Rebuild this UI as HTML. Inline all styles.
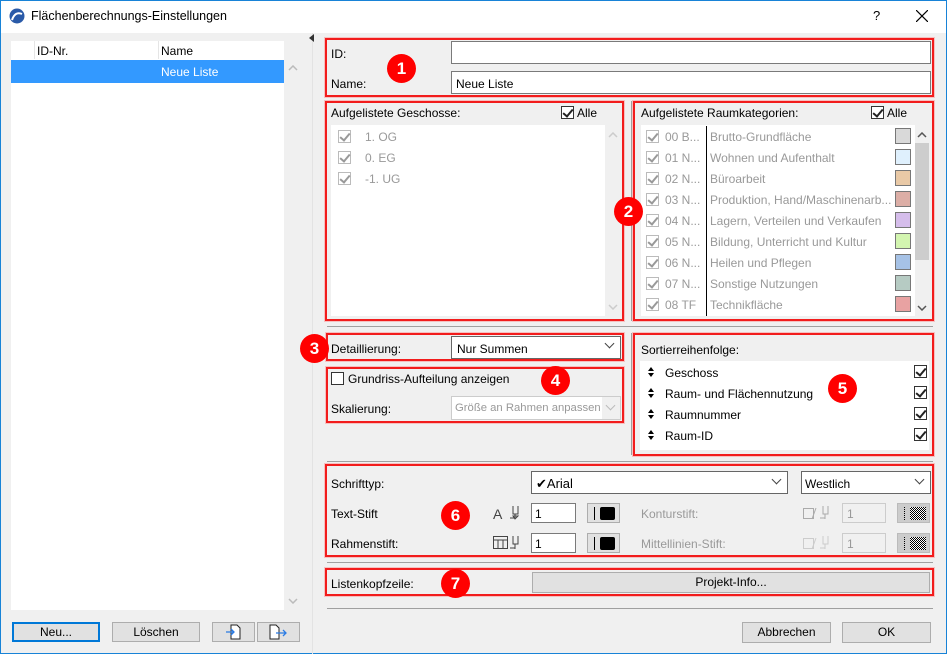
<!DOCTYPE html>
<html><head><meta charset="utf-8"><style>
*{box-sizing:border-box;margin:0;padding:0}
body{width:947px;height:654px;overflow:hidden;background:#f0f0f0;font-family:"Liberation Sans",sans-serif;font-size:12px;color:#000;position:relative}
.a{position:absolute}
.red{position:absolute;border:2px solid #f21c1c;box-shadow:0 0 0 1px rgba(255,120,120,.4)}
.in{position:absolute;background:#fff;border:1px solid #7a7a7a}
.btn{position:absolute;background:#e1e1e1;border:1px solid #adadad;text-align:center;line-height:18px}
.num{position:absolute;width:29px;height:29px;border-radius:50%;background:#f00;color:#fff;font-weight:bold;font-size:17px;text-align:center;line-height:29px}
.cb{position:absolute;width:13px;height:13px;border:1px solid #333;background:#fff}
.cb.g{border-color:#bbb;background:#fff}
.cb::after{content:"";position:absolute;left:3px;top:0px;width:4px;height:8px;border:solid #222;border-width:0 2px 2px 0;transform:rotate(40deg)}
.cb.g::after{border-color:#999}
.cb.n::after{display:none}
.hl{position:absolute;height:1px;background:#a0a0a0}
.gr{color:#999}
.dd{position:absolute;right:6px;top:5px;width:7px;height:7px;border:solid #444;border-width:0 1px 1px 0;transform:rotate(45deg)}
.sw{position:absolute;width:16px;height:16px;border:1px solid #777}
</style></head><body>
<div class="a" style="left:0;top:0;width:947px;height:654px;border:1px solid #1883d7"></div>
<div class="a" style="left:1px;top:1px;width:945px;height:32px;background:#fff"></div>
<svg class="a" style="left:9px;top:8px" width="16" height="16"><circle cx="8" cy="8" r="7.5" fill="#2a5aa8"/><path d="M3 12 Q6 3 13 6" stroke="#fff" stroke-width="2" fill="none"/></svg>
<div class="a" style="left:31px;top:9px;font-size:12.5px">Flächenberechnungs-Einstellungen</div>
<div class="a" style="left:873px;top:8px;font-size:13px">?</div>
<svg class="a" style="left:916px;top:10px" width="12" height="12"><path d="M0 0L12 12M12 0L0 12" stroke="#000" stroke-width="1.2"/></svg>

<!-- left list -->
<div class="a" style="left:11px;top:41px;width:273px;height:569px;background:#fff"></div>
<div class="a" style="left:34px;top:41px;width:1px;height:18px;background:#e5e5e5"></div>
<div class="a" style="left:158px;top:41px;width:1px;height:18px;background:#e5e5e5"></div>
<div class="a" style="left:37px;top:44px">ID-Nr.</div>
<div class="a" style="left:161px;top:44px">Name</div>
<div class="a" style="left:11px;top:60px;width:273px;height:23px;background:#3399ff"></div>
<div class="a" style="left:161px;top:65px;color:#fff">Neue Liste</div>
<svg class="a" style="left:288px;top:65px" width="10" height="6"><path d="M1 5l4-4 4 4" stroke="#bbb" stroke-width="1.5" fill="none"/></svg>
<svg class="a" style="left:288px;top:598px" width="10" height="6"><path d="M1 1l4 4 4-4" stroke="#bbb" stroke-width="1.5" fill="none"/></svg>
<div class="btn" style="left:12px;top:622px;width:88px;height:20px;border:2px solid #0078d7;line-height:16px">Neu...</div>
<div class="btn" style="left:112px;top:622px;width:88px;height:20px">Löschen</div>
<div class="btn" style="left:212px;top:622px;width:43px;height:20px"></div>
<div class="btn" style="left:257px;top:622px;width:43px;height:20px"></div>
<svg class="a" style="left:224px;top:624px" width="20" height="16"><path d="M7 1h6l3 3v11H7z" fill="#fff" stroke="#222"/><path d="M2 8h8M7 5l3 3-3 3" stroke="#2a7be4" fill="none" stroke-width="1.3"/></svg>
<svg class="a" style="left:268px;top:624px" width="22" height="16"><path d="M2 1h6l3 3v11H2z" fill="#fff" stroke="#222"/><path d="M8 9h10M15 6l3 3-3 3" stroke="#2a7be4" fill="none" stroke-width="1.3"/></svg>

<div class="a" style="left:312px;top:33px;width:1px;height:621px;background:#e3e3e3"></div>
<div class="a" style="left:309px;top:34px;width:0;height:0;border-top:4px solid transparent;border-bottom:4px solid transparent;border-right:5px solid #333"></div>

<!-- box1 -->
<div class="red" style="left:325px;top:38px;width:609px;height:59px"></div>
<div class="a" style="left:331px;top:47px">ID:</div>
<div class="in" style="left:451px;top:41px;width:480px;height:23px"></div>
<div class="a" style="left:331px;top:77px">Name:</div>
<div class="in" style="left:451px;top:71px;width:480px;height:23px"></div>
<div class="a" style="left:456px;top:77px">Neue Liste</div>
<div class="num" style="left:387px;top:54px">1</div>

<!-- box2 left -->
<div class="red" style="left:325px;top:101px;width:299px;height:220px"></div>
<div class="a" style="left:331px;top:106px">Aufgelistete Geschosse:</div>
<div class="cb" style="left:561px;top:106px"></div><div class="a" style="left:577px;top:106px">Alle</div>
<div class="a" style="left:331px;top:125px;width:274px;height:191px;background:#fff"></div>
<svg class="a" style="left:608px;top:132px" width="10" height="6"><path d="M1 5l4-4 4 4" stroke="#ccc" stroke-width="1.5" fill="none"/></svg>
<svg class="a" style="left:608px;top:304px" width="10" height="6"><path d="M1 1l4 4 4-4" stroke="#ccc" stroke-width="1.5" fill="none"/></svg>
<div class="cb g" style="left:338px;top:130px"></div><div class="a gr" style="left:365px;top:130px">1. OG</div>
<div class="cb g" style="left:338px;top:151px"></div><div class="a gr" style="left:365px;top:151px">0. EG</div>
<div class="cb g" style="left:338px;top:172px"></div><div class="a gr" style="left:365px;top:172px">-1. UG</div>

<div class="a" style="left:631px;top:101px;width:1px;height:220px;background:#a0a0a0"></div>
<!-- box2 right -->
<div class="red" style="left:633px;top:101px;width:301px;height:220px"></div>
<div class="a" style="left:641px;top:106px">Aufgelistete Raumkategorien:</div>
<div class="cb" style="left:871px;top:106px"></div><div class="a" style="left:887px;top:106px">Alle</div>
<div class="a" style="left:641px;top:125px;width:274px;height:191px;background:#fff"></div>
<div class="a" style="left:706px;top:126px;width:1px;height:190px;background:#000"></div>
<div class="a" style="left:915px;top:143px;width:14px;height:117px;background:#cdcdcd"></div>
<svg class="a" style="left:917px;top:132px" width="10" height="6"><path d="M1 5l4-4 4 4" stroke="#555" stroke-width="1.5" fill="none"/></svg>
<svg class="a" style="left:917px;top:305px" width="10" height="6"><path d="M1 1l4 4 4-4" stroke="#555" stroke-width="1.5" fill="none"/></svg>
<div class="cb g" style="left:646px;top:130px"></div><div class="a gr" style="left:665px;top:130px">00 B...</div><div class="a gr" style="left:710px;top:130px">Brutto-Grundfläche</div><div class="sw" style="left:895px;top:128px;background:#d9d9d9"></div>
<div class="cb g" style="left:646px;top:151px"></div><div class="a gr" style="left:665px;top:151px">01 N...</div><div class="a gr" style="left:710px;top:151px">Wohnen und Aufenthalt</div><div class="sw" style="left:895px;top:149px;background:#dff0fd"></div>
<div class="cb g" style="left:646px;top:172px"></div><div class="a gr" style="left:665px;top:172px">02 N...</div><div class="a gr" style="left:710px;top:172px">Büroarbeit</div><div class="sw" style="left:895px;top:170px;background:#e9c9a6"></div>
<div class="cb g" style="left:646px;top:193px"></div><div class="a gr" style="left:665px;top:193px">03 N...</div><div class="a gr" style="left:710px;top:193px">Produktion, Hand/Maschinenarb...</div><div class="sw" style="left:895px;top:191px;background:#dcaea6"></div>
<div class="cb g" style="left:646px;top:214px"></div><div class="a gr" style="left:665px;top:214px">04 N...</div><div class="a gr" style="left:710px;top:214px">Lagern, Verteilen und Verkaufen</div><div class="sw" style="left:895px;top:212px;background:#d5bdeb"></div>
<div class="cb g" style="left:646px;top:235px"></div><div class="a gr" style="left:665px;top:235px">05 N...</div><div class="a gr" style="left:710px;top:235px">Bildung, Unterricht und Kultur</div><div class="sw" style="left:895px;top:233px;background:#d3f5b0"></div>
<div class="cb g" style="left:646px;top:256px"></div><div class="a gr" style="left:665px;top:256px">06 N...</div><div class="a gr" style="left:710px;top:256px">Heilen und Pflegen</div><div class="sw" style="left:895px;top:254px;background:#a6c2e6"></div>
<div class="cb g" style="left:646px;top:277px"></div><div class="a gr" style="left:665px;top:277px">07 N...</div><div class="a gr" style="left:710px;top:277px">Sonstige Nutzungen</div><div class="sw" style="left:895px;top:275px;background:#b6cbc3"></div>
<div class="cb g" style="left:646px;top:298px"></div><div class="a gr" style="left:665px;top:298px">08 TF</div><div class="a gr" style="left:710px;top:298px">Technikfläche</div><div class="sw" style="left:895px;top:296px;background:#e8a2a2"></div>
<div class="num" style="left:614px;top:197px">2</div>

<div class="hl" style="left:327px;top:326px;width:606px"></div>

<!-- box3 -->
<div class="red" style="left:326px;top:333px;width:298px;height:28px"></div>
<div class="a" style="left:331px;top:342px">Detaillierung:</div>
<div class="in" style="left:451px;top:336px;width:170px;height:23px;border-color:#666"></div>
<div class="a" style="left:457px;top:342px">Nur Summen</div>
<div class="dd" style="left:606px;top:340px"></div>
<div class="num" style="left:300px;top:334px">3</div>

<!-- box4 -->
<div class="red" style="left:326px;top:367px;width:298px;height:56px"></div>
<div class="cb n" style="left:331px;top:372px"></div>
<div class="a" style="left:348px;top:372px">Grundriss-Aufteilung anzeigen</div>
<div class="a" style="left:331px;top:402px">Skalierung:</div>
<div class="a" style="left:451px;top:396px;width:170px;height:24px;border:1px solid #ccc;background:#f0f0f0"></div>
<div class="a" style="left:452px;top:397px;width:150px;height:22px;background:#fff"></div>
<div class="a" style="left:455px;top:402px;color:#999;font-size:11.3px">Größe an Rahmen anpassen</div>
<div class="dd" style="left:607px;top:402px;border-color:#bbb"></div>
<div class="num" style="left:541px;top:366px">4</div>

<div class="a" style="left:631px;top:333px;width:1px;height:122px;background:#a0a0a0"></div>
<!-- box5 -->
<div class="red" style="left:633px;top:333px;width:301px;height:123px"></div>
<div class="a" style="left:641px;top:343px">Sortierreihenfolge:</div>
<div class="a" style="left:640px;top:361px;width:289px;height:89px;background:#fff"></div>
<svg class="a" style="left:648px;top:367px" width="6" height="10"><path d="M0 4L3 0 6 4zM0 6L3 10 6 6z" fill="#000"/></svg><div class="a" style="left:665px;top:366px">Geschoss</div><div class="cb" style="left:914px;top:365px"></div>
<svg class="a" style="left:648px;top:388px" width="6" height="10"><path d="M0 4L3 0 6 4zM0 6L3 10 6 6z" fill="#000"/></svg><div class="a" style="left:665px;top:387px">Raum- und Flächennutzung</div><div class="cb" style="left:914px;top:386px"></div>
<svg class="a" style="left:648px;top:409px" width="6" height="10"><path d="M0 4L3 0 6 4zM0 6L3 10 6 6z" fill="#000"/></svg><div class="a" style="left:665px;top:408px">Raumnummer</div><div class="cb" style="left:914px;top:407px"></div>
<svg class="a" style="left:648px;top:430px" width="6" height="10"><path d="M0 4L3 0 6 4zM0 6L3 10 6 6z" fill="#000"/></svg><div class="a" style="left:665px;top:429px">Raum-ID</div><div class="cb" style="left:914px;top:428px"></div>
<div class="num" style="left:828px;top:374px">5</div>

<div class="hl" style="left:327px;top:461px;width:606px"></div>

<!-- box6 -->
<div class="red" style="left:325px;top:464px;width:609px;height:93px"></div>
<div class="a" style="left:331px;top:477px">Schrifttyp:</div>
<div class="in" style="left:531px;top:471px;width:257px;height:23px;border-color:#666"></div>
<div class="a" style="left:536px;top:476px;font-size:13px">✔Arial</div>
<div class="dd" style="left:773px;top:476px"></div>
<div class="in" style="left:801px;top:471px;width:130px;height:23px;border-color:#666"></div>
<div class="a" style="left:805px;top:477px">Westlich</div>
<div class="dd" style="left:916px;top:476px"></div>
<div class="a" style="left:331px;top:507px">Text-Stift</div>
<div class="a" style="left:331px;top:537px">Rahmenstift:</div>
<div class="a" style="left:493px;top:506px;font-size:14px;color:#444">A</div>
<svg class="a" style="left:509px;top:505px" width="14" height="16"><path d="M4 1v8h5V1M6 9v5M1 13h5M6 14l-2-3h5z" stroke="#444" fill="none"/></svg>
<svg class="a" style="left:493px;top:535px" width="30" height="16"><rect x="0.5" y="1.5" width="14" height="12" fill="none" stroke="#444"/><path d="M0 5h15M5 5v9M10 5v9" stroke="#444"/><path d="M20 1v8h5V1M22 9v5M17 13h5" stroke="#444" fill="none"/></svg>
<div class="in" style="left:531px;top:503px;width:45px;height:20px"></div><div class="a" style="left:535px;top:507px">1</div>
<div class="in" style="left:531px;top:533px;width:45px;height:20px"></div><div class="a" style="left:535px;top:537px">1</div>
<div class="btn" style="left:587px;top:503px;width:33px;height:20px"><span style="position:absolute;left:6px;top:3px;width:1px;height:13px;background:#000"></span><span style="position:absolute;left:12px;top:3px;width:15px;height:13px;background:#000;border-radius:2px"></span></div>
<div class="btn" style="left:587px;top:533px;width:33px;height:20px"><span style="position:absolute;left:6px;top:3px;width:1px;height:13px;background:#000"></span><span style="position:absolute;left:12px;top:3px;width:15px;height:13px;background:#000;border-radius:2px"></span></div>
<div class="a" style="left:641px;top:507px;color:#999">Konturstift:</div>
<div class="a" style="left:641px;top:537px;color:#999">Mittellinien-Stift:</div>
<svg class="a" style="left:803px;top:505px" width="30" height="16"><path d="M0.5 3.5h10v10h-10zM13 3l-4 11M20 1v8h5V1M22 9v5M17 13h5" stroke="#aaa" fill="none"/></svg>
<svg class="a" style="left:803px;top:535px" width="30" height="16"><path d="M0.5 3.5h10v10h-10zM13 3l-4 11M20 1v8h5V1M22 9v5M17 13h5" stroke="#ccc" fill="none"/></svg>
<div class="a" style="left:842px;top:503px;width:44px;height:20px;border:1px solid #ccc;background:#f0f0f0;color:#999;padding:3px 4px">1</div>
<div class="a" style="left:842px;top:533px;width:44px;height:20px;border:1px solid #ccc;background:#f0f0f0;color:#999;padding:3px 4px">1</div>
<div class="btn" style="left:897px;top:503px;width:33px;height:20px;background:#ccc;border-color:#bbb"><span style="position:absolute;left:6px;top:3px;width:1px;height:13px;border-left:1px dotted #000"></span><span style="position:absolute;left:12px;top:3px;width:16px;height:13px;background:repeating-conic-gradient(#000 0 25%,#fff 0 50%) 0 0/2px 2px"></span></div>
<div class="btn" style="left:897px;top:533px;width:33px;height:20px;background:#ccc;border-color:#bbb"><span style="position:absolute;left:6px;top:3px;width:1px;height:13px;border-left:1px dotted #000"></span><span style="position:absolute;left:12px;top:3px;width:16px;height:13px;background:repeating-conic-gradient(#000 0 25%,#fff 0 50%) 0 0/2px 2px"></span></div>
<div class="num" style="left:441px;top:501px">6</div>

<div class="hl" style="left:327px;top:562px;width:606px"></div>
<!-- box7 -->
<div class="red" style="left:325px;top:568px;width:609px;height:28px"></div>
<div class="a" style="left:331px;top:577px">Listenkopfzeile:</div>
<div class="btn" style="left:532px;top:572px;width:398px;height:21px">Projekt-Info...</div>
<div class="num" style="left:441px;top:569px">7</div>

<div class="hl" style="left:327px;top:608px;width:606px"></div>
<div class="btn" style="left:742px;top:622px;width:89px;height:21px">Abbrechen</div>
<div class="btn" style="left:842px;top:622px;width:89px;height:21px">OK</div>
</body></html>
